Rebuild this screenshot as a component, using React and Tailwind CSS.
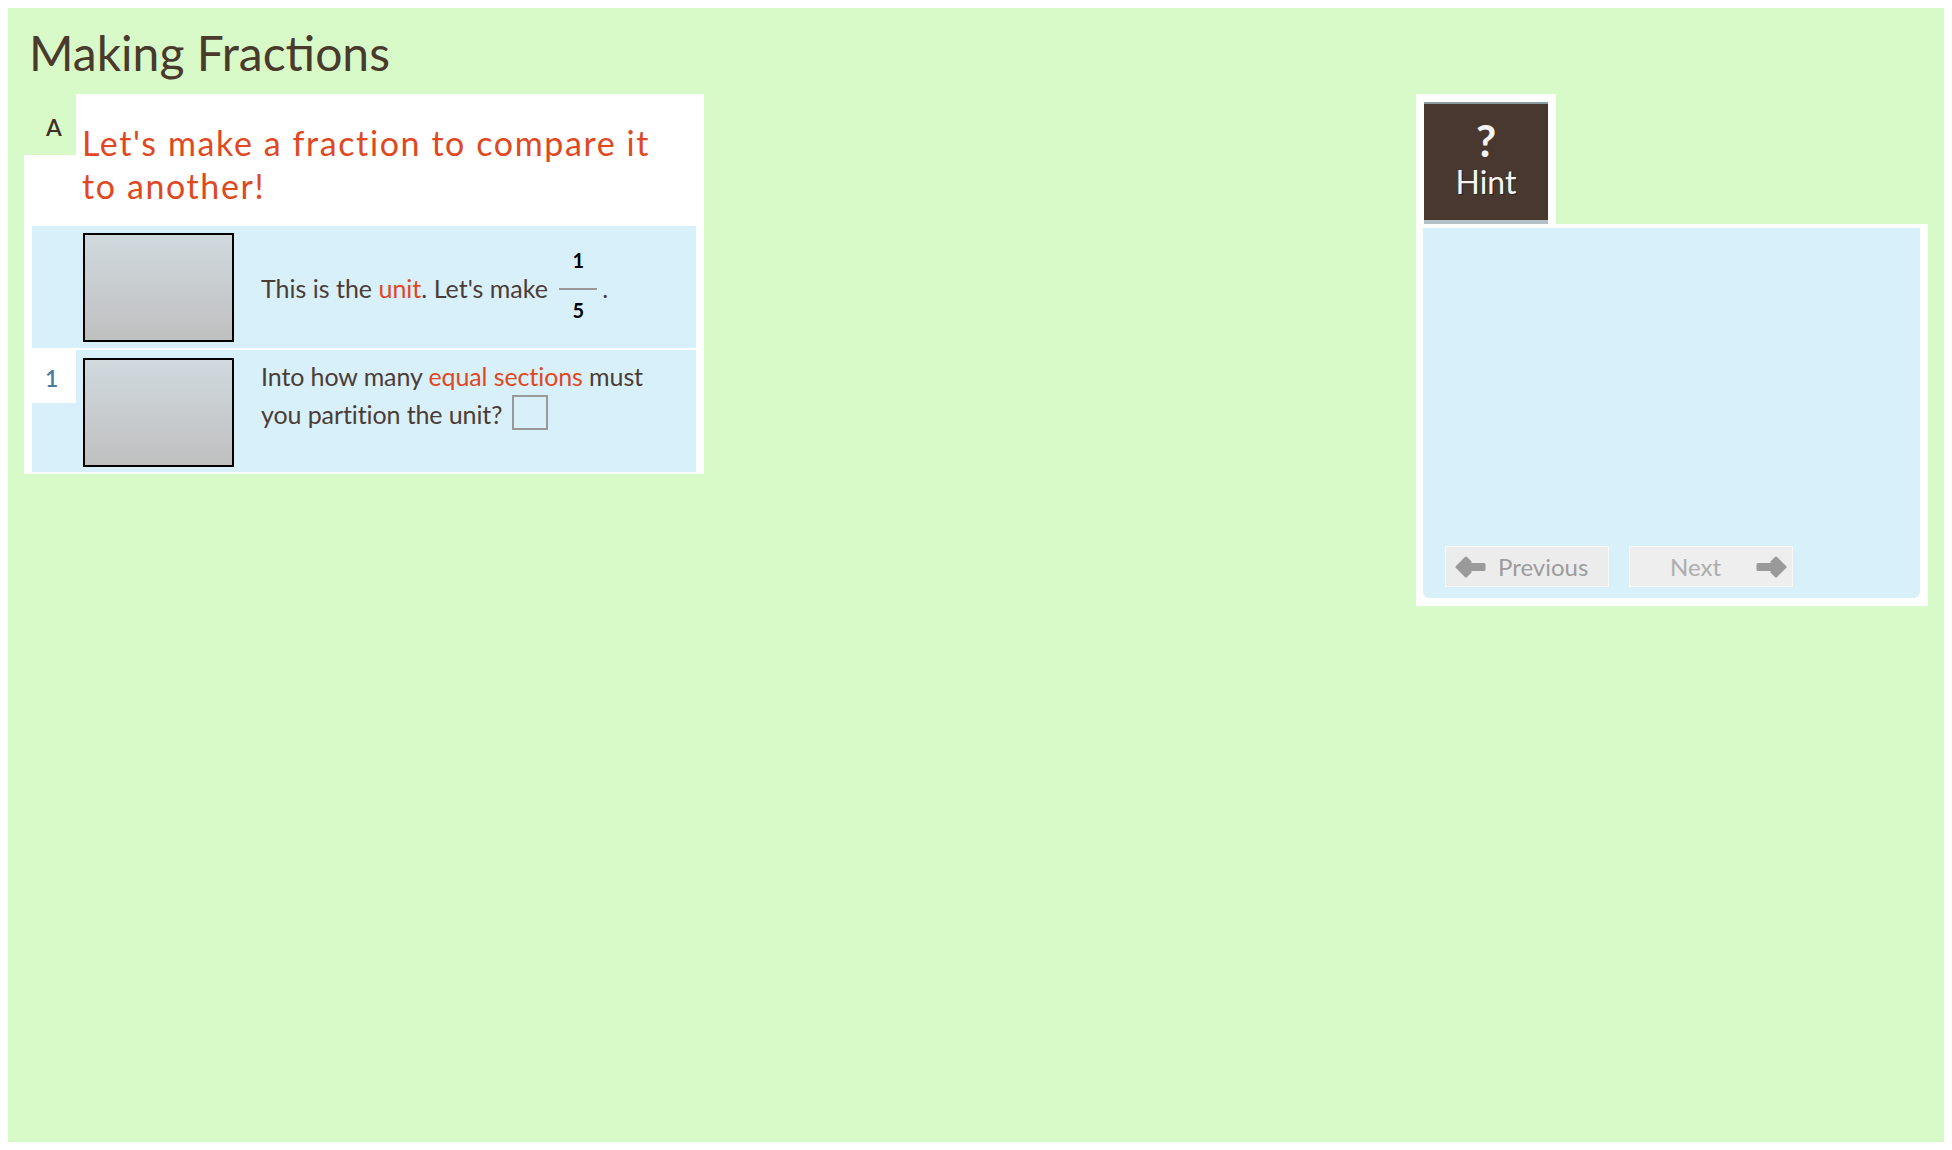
const Arrow = ({ flip }) => (
  <svg viewBox="0 0 31 22" className={flip ? "w-[31px] h-[22px] -scale-x-100" : "w-[31px] h-[22px]"}>
    <path
      d="M2 11 L11 2 L15 6 L11 8.5 H29 V13.5 H11 L15 16 L11 20 Z"
      fill="#9a9a9a"
      stroke="#9a9a9a"
      strokeWidth="3"
      strokeLinejoin="round"
    />
  </svg>
);

const UnitBox = ({ top }) => (
  <div
    className={`${top} ml-[7px] w-[151px] h-[109px] shrink-0 border-2 border-black bg-linear-to-b from-[#d0d9de] to-[#c0c0c0]`}
  />
);

const App = () => {
  return (
    <div className="bg-white p-2 font-[Lato,sans-serif]">
      <div className="h-[1134px] bg-[#d8f9c8]">
        <h1 className="pt-[21px] pl-[21px] text-[48px] leading-none text-[#4a3a2c]">Making Fractions</h1>

        <div className="mt-[17px] px-[16px] flex justify-between items-start">
          {/* problem card */}
          <div className="w-[680px] flex flex-col">
            <div className="flex">
              <div className="w-[52px] flex flex-col">
                <div className="h-[61px] pt-[22px] pl-[22px] text-[23px] leading-none font-semibold text-[#3e3028]">A</div>
                <div className="flex-1 bg-white" />
              </div>
              <div className="flex-1 bg-white pt-[27px] pl-[6px] pb-[19px] text-[34px] leading-[43px] tracking-[1.6px] text-[#e0481f]">
                Let's make a fraction to compare it
                <br />
                to another!
              </div>
            </div>

            <div className="bg-white px-[8px] pb-[2px] flex flex-col gap-[2px] text-[25px] leading-[37px] text-[#4b3d35]">
              <div className="flex h-[122px] bg-[#d8f0fa]">
                <div className="w-[44px] shrink-0" />
                <UnitBox top="mt-[7px]" />
                <div className="ml-[27px] self-center mb-[5px]">
                  This is the <span className="text-[#e0481f]">unit</span>. Let's make{" "}
                  <span className="inline-flex flex-col items-center align-[30px] mx-[5px]">
                    <span className="text-[20px] leading-[20px] font-bold text-black">1</span>
                    <span className="mt-[18px] w-[38px] h-[2px] bg-[#999]" />
                    <span className="mt-[10px] text-[20px] leading-[20px] font-bold text-black">5</span>
                  </span>
                  .
                </div>
              </div>

              <div className="flex h-[122px] bg-[#d8f0fa]">
                <div className="w-[44px] shrink-0 flex flex-col">
                  <div className="h-[53px] bg-white pt-[17px] pl-[13px] text-[23px] leading-none font-semibold text-[#4b7b9b]">1</div>
                </div>
                <UnitBox top="mt-[8px]" />
                <div className="ml-[27px] pt-[8px] tracking-[-0.1px]">
                  Into how many <span className="text-[#e0481f]">equal sections</span> must
                  <br />
                  you partition the unit?
                  <span className="inline-block ml-[10px] w-[36px] h-[35px] border-2 border-[#999] align-[-6px]" />
                </div>
              </div>
            </div>
          </div>

          {/* hint panel */}
          <div className="w-[512px] flex flex-col">
            <div className="w-[140px] bg-white px-[8px] pt-[8px]">
              <button className="w-[124px] h-[122px] bg-[#483830] border-t-2 border-t-[#8c9ca4] border-b-4 border-b-[#b4c0c8] flex flex-col items-center text-[#f4f4f4]">
                <span className="mt-[14px] text-[44px] leading-none font-bold">?</span>
                <span className="mt-[4px] text-[32px] leading-none [text-shadow:1px_1px_0_#2a1e18]">Hint</span>
              </button>
            </div>
            <div className="bg-white pl-[7px] pr-[8px] pt-[4px] pb-[8px]">
              <div className="h-[370px] bg-[#d8f0fa] rounded-b-[6px] flex items-end gap-[20px] pl-[22px] pb-[11px]">
                <button className="w-[164px] h-[41px] flex items-center bg-[#ececec] border border-[#f7f7f7] pl-[9px] text-[24px] leading-none text-[#9c9c9c]">
                  <Arrow />
                  <span className="ml-[12px]">Previous</span>
                </button>
                <button className="w-[164px] h-[41px] flex items-center bg-[#eeeeee] border border-[#f7f7f7] pr-[5px] text-[24px] leading-none text-[#adadad]">
                  <span className="ml-[40px]">Next</span>
                  <span className="ml-auto flex">
                    <Arrow flip />
                  </span>
                </button>
              </div>
            </div>
          </div>
        </div>
      </div>
    </div>
  );
};

export default App;
